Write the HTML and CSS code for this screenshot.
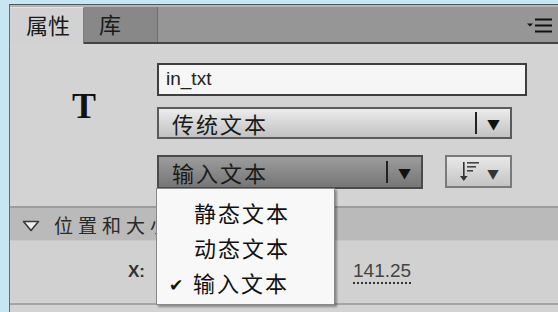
FILE: index.html
```html
<!DOCTYPE html>
<html>
<head>
<meta charset="utf-8">
<link rel="stylesheet" href="styles.css">
</head>
<body>
<div class="panel">
  <div class="tabbar">
    <div class="tab active">属性</div>
    <div class="tab">库</div>
    <div class="bar-fill"></div>
    <div class="menu-icon">
      <svg width="30" height="18" viewBox="0 0 30 18">
        <path d="M3 6.5 L9 6.5 L6 9.5 Z" fill="#111"/>
        <rect x="11" y="1.5" width="17" height="2" fill="#111"/>
        <rect x="11" y="7.5" width="17" height="2" fill="#111"/>
        <rect x="11" y="13.5" width="17" height="2" fill="#111"/>
      </svg>
    </div>
  </div>
  <div class="content">
    <div class="top">
      <div class="type-icon">T</div>
      <div class="controls">
        <div class="text-input">in_txt</div>
        <div class="select light wide">
          <span class="label">传统文本</span>
          <span class="sep"></span>
          <span class="arrow">▼</span>
        </div>
        <div class="row">
          <div class="select dark mid">
            <span class="label">输入文本</span>
            <span class="sep"></span>
            <span class="arrow">▼</span>
          </div>
          <div class="icon-btn">
            <svg width="22" height="22" viewBox="0 0 22 22">
              <rect x="4" y="1" width="1.6" height="16" fill="#333"/>
              <path d="M1 15 L8.6 15 L4.8 20 Z" fill="#333"/>
              <rect x="8" y="1" width="12" height="1.6" fill="#444"/>
              <rect x="8" y="5" width="9" height="1.6" fill="#444"/>
              <rect x="8" y="9" width="6" height="1.6" fill="#444"/>
            </svg>
            <span class="arrow small">▼</span>
          </div>
        </div>
      </div>
    </div>
    <div class="section-head">
      <svg class="tri" width="18" height="12" viewBox="0 0 18 12">
        <path d="M1.5 1.5 L16.5 1.5 L9 10.5 Z" fill="#eeeeee" stroke="#3a3a3a" stroke-width="1.6" stroke-linejoin="round"/>
      </svg>
      <span class="sec-title">位置和大小</span>
    </div>
    <div class="section-body">
      <span class="xlabel">X:</span>
      <span class="xval">141.25</span>
    </div>
  </div>
  <div class="menu">
    <div class="item">静态文本</div>
    <div class="item">动态文本</div>
    <div class="item checked"><span class="check">✔</span>输入文本</div>
  </div>
</div>
</body>
</html>
```

FILE: styles.css
```css
html, body {
  margin: 0;
  padding: 0;
}
body {
  background: #c7e6f2;
  width: 558px;
  height: 312px;
  overflow: hidden;
  font-family: "Noto Sans CJK SC", "Liberation Sans", sans-serif;
  color: #1a1a1a;
}
.panel {
  position: relative;
  margin: 4px 0 0 9px;
  border-top: 1px solid #4e5a5c;
  border-left: 1px solid #6a6a6a;
  height: 308px;
  background: #d3d3d3;
}
.tabbar {
  display: flex;
  height: 35px;
  background: #969696;
  border-top: 2px solid #b4b4b4;
  border-bottom: 2px solid #444;
  position: relative;
}
.tab {
  width: 74px;
  box-sizing: border-box;
  font-size: 22px;
  line-height: 33px;
  padding-left: 16px;
  letter-spacing: 0;
  background: #888888;
  border-right: 1px solid #6e6e6e;
}
.tab + .tab {
  padding-left: 15px;
}
.tab.active {
  background: #d2d2d2;
  margin-bottom: -2px;
  height: 37px;
  border-right: 1px solid #7a7a7a;
  border-top: 1px solid #e0e0e0;
}
.bar-fill {
  flex: 1;
}
.menu-icon {
  width: 34px;
  display: flex;
  align-items: center;
  padding-top: 2px;
}
.content {
  padding-top: 19px;
}
.top {
  display: flex;
}
.type-icon {
  width: 147px;
  box-sizing: border-box;
  padding: 23px 0 0 62px;
  font-family: "Liberation Serif", serif;
  font-weight: bold;
  font-size: 36px;
  line-height: 40px;
  color: #111;
}
.controls {
  display: flex;
  flex-direction: column;
}
.text-input {
  width: 370px;
  height: 33px;
  box-sizing: border-box;
  border: 2px solid #3e3e3e;
  background: #f6f6f6;
  font-family: "Liberation Sans", sans-serif;
  font-size: 19px;
  line-height: 28px;
  padding-left: 7px;
  color: #222;
}
.select {
  display: flex;
  align-items: center;
  box-sizing: border-box;
  border: 2px solid #555;
}
.select.light {
  margin-top: 11px;
  height: 32px;
  width: 355px;
  background: linear-gradient(#ececec, #c2c2c2);
  border-color: #5a5a5a;
}
.select.dark {
  height: 34px;
  width: 266px;
  background: linear-gradient(#9c9c9c, #767676);
  border-color: #4a4a4a;
}
.select .label {
  flex: 1;
  font-size: 22px;
  letter-spacing: 2px;
  padding-left: 13px;
  line-height: 28px;
}
.select .sep {
  width: 2px;
  height: 22px;
  background: #222;
}
.select .arrow {
  width: 33px;
  text-align: center;
  font-size: 13px;
  color: #111;
}
.row {
  display: flex;
  margin-top: 16px;
  gap: 22px;
}
.icon-btn {
  width: 67px;
  height: 33px;
  box-sizing: border-box;
  border: 2px solid #7a7a7a;
  background: linear-gradient(#e8e8e8, #c4c4c4);
  display: flex;
  align-items: center;
  padding-left: 12px;
  gap: 6px;
}
.icon-btn .arrow {
  font-size: 12px;
  color: #333;
  padding-top: 3px;
}
.section-head {
  margin-top: 17px;
  border-top: 2px solid #9c9c9c;
  height: 32px;
  background: #bababa;
  display: flex;
  align-items: center;
  border-bottom: 1px solid #c8c8c8;
}
.tri {
  margin-left: 12px;
  margin-top: 3px;
}
.sec-title {
  margin-left: 14px;
  font-size: 19px;
  letter-spacing: 5px;
  color: #2a2a2a;
}
.section-body {
  height: 62px;
  border-bottom: 2px solid #a4a4a4;
  background: #d1d1d1;
  display: flex;
  align-items: center;
  font-family: "Liberation Sans", sans-serif;
}
.xlabel {
  margin-left: 118px;
  font-size: 17px;
  font-weight: bold;
  color: #333;
}
.xval {
  margin-left: 208px;
  font-size: 19px;
  color: #444;
  border-bottom: 2px dotted #333;
  line-height: 22px;
}
.menu {
  position: absolute;
  left: 146px;
  top: 183px;
  width: 179px;
  height: 117px;
  box-sizing: border-box;
  background: #f8f8f8;
  border: 1px solid #8a8a8a;
  box-shadow: 2px 2px 2px rgba(0,0,0,0.35);
  padding-top: 6px;
}
.item {
  height: 35px;
  font-size: 22px;
  line-height: 35px;
  letter-spacing: 2px;
  padding-left: 37px;
  position: relative;
  color: #111;
}
.item.checked {
  padding-left: 36px;
}
.check {
  position: absolute;
  left: 12px;
  font-size: 17px;
  top: 1px;
}
```
